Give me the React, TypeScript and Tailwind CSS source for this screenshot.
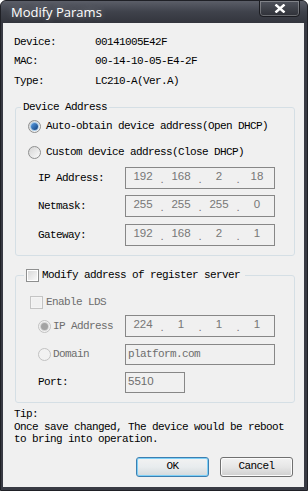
import React from 'react';

const mono = "font-['Liberation_Mono','DejaVu_Sans_Mono',monospace] text-[11px] tracking-[-0.6px]";

function Radio({ checked, disabled }: { checked?: boolean; disabled?: boolean }) {
  return (
    <span
      className={`w-[13px] h-[13px] rounded-full border flex items-center justify-center shrink-0 ${
        disabled ? 'border-[#c2c2c2] bg-[#f2f2f2]' : 'border-[#8e8f8f] bg-gradient-to-br from-[#d4d4d4] to-[#fbfbfb]'
      }`}
    >
      {checked && (
        <span
          className={`w-[7px] h-[7px] rounded-full ${
            disabled
              ? 'bg-[#a3a3a3] shadow-[0_0_0_1px_#d4d4d4]'
              : 'bg-gradient-to-br from-[#5aa0e6] to-[#0d3f7e] shadow-[0_0_0_1px_#a9cbe9]'
          }`}
        />
      )}
    </span>
  );
}

function Check({ disabled }: { disabled?: boolean }) {
  return (
    <span
      className={`w-[13px] h-[13px] border p-[1px] flex shrink-0 ${
        disabled ? 'border-[#c4c4c4] bg-[#f4f4f4]' : 'border-[#8e8f8f] bg-white'
      }`}
    >
      <span className={`flex-1 ${disabled ? 'bg-[#f0f0f0]' : 'bg-gradient-to-br from-[#d9d9d9] to-[#f8f8f8]'}`} />
    </span>
  );
}

function IpBox({ parts }: { parts: string[] }) {
  return (
    <div className="w-[150px] h-full border border-[#878787] flex items-center font-['Liberation_Sans',Arial,sans-serif] text-[11.5px] tracking-normal text-[#777777] leading-none">
      {parts.map((p, i) => (
        <React.Fragment key={i}>
          {i > 0 && <span className="w-[4px] text-center pt-[3px]">.</span>}
          <span className="flex-1 text-center pb-[3px]">{p}</span>
        </React.Fragment>
      ))}
    </div>
  );
}

function InfoRow({ label, value, h }: { label: string; value: string; h: string }) {
  return (
    <div className={`flex items-center ${h}`}>
      <span className="w-[81px]">{label}</span>
      <span>{value}</span>
    </div>
  );
}

export default function App(): JSX.Element {
  return (
    <div className="w-[308px] h-[491px] bg-[#383a43] border border-[#1f2026] rounded-t-[6px] flex flex-col pl-[2px] pr-[3px] pb-[3px] overflow-hidden">
      {/* title bar */}
      <div className="h-[22px] -mx-[2px] -mr-[3px] bg-gradient-to-b from-[#5b5e68] via-[#3f424b] to-[#33353d] flex justify-between items-start">
        <span className="ml-[10px] mt-[3px] text-white text-[13px] leading-[17px] font-['Open_Sans','Noto_Sans',sans-serif] [text-shadow:0_0_6px_rgba(255,255,255,0.35)]">
          Modify Params
        </span>
        <div className="mr-[7px] -mt-[1px] w-[41px] h-[17px] rounded-b-[4px] border border-[#1b1c21] bg-gradient-to-b from-[#50535c] to-[#2f3138] shadow-[inset_0_0_0_1px_rgba(255,255,255,0.28)] flex items-center justify-center">
          <svg width="12" height="9" viewBox="0 0 12 9">
            <path d="M1.5 0.5 L10.5 8.5 M10.5 0.5 L1.5 8.5" stroke="#ffffff" strokeWidth="2.4" />
          </svg>
        </div>
      </div>

      {/* client area */}
      <div className={`flex-1 bg-[#f0f0f0] text-black leading-none ${mono} flex flex-col`}>
        <div className="pt-[9px] pl-[11px]">
          <InfoRow label="Device:" value="00141005E42F" h="h-[20px]" />
          <InfoRow label="MAC:" value="00-14-10-05-E4-2F" h="h-[19px]" />
          <InfoRow label="Type:" value="LC210-A(Ver.A)" h="h-[20px]" />
        </div>

        <fieldset className="mt-[10px] ml-[12px] w-[280px] border border-[#d5dfe5] rounded-[3px] pb-[9px]">
          <legend className="ml-[5px] px-[2px] h-[12px] leading-[12px]">Device Address</legend>
          <div className="h-[26px] flex items-center pl-[12px] gap-[5px]">
            <Radio checked />
            <span>Auto-obtain device address(Open DHCP)</span>
          </div>
          <div className="h-[26px] flex items-center pl-[12px] gap-[5px]">
            <Radio />
            <span>Custom device address(Close DHCP)</span>
          </div>
          <div className="mt-[2px] h-[22px] flex items-center pl-[22px]">
            <span className="w-[87px]">IP Address:</span>
            <IpBox parts={['192', '168', '2', '18']} />
          </div>
          <div className="mt-[6px] h-[22px] flex items-center pl-[22px]">
            <span className="w-[87px]">Netmask:</span>
            <IpBox parts={['255', '255', '255', '0']} />
          </div>
          <div className="mt-[7px] h-[22px] flex items-center pl-[22px]">
            <span className="w-[87px]">Gateway:</span>
            <IpBox parts={['192', '168', '2', '1']} />
          </div>
        </fieldset>

        <fieldset className="mt-[12px] ml-[12px] w-[280px] border border-[#d5dfe5] rounded-[3px] pb-[9px]">
          <legend className="ml-[8px] pl-[2px] pr-[5px] h-[14px] flex items-center gap-[3px]">
            <Check />
            <span>Modify address of register server</span>
          </legend>
          <div className="mt-[10px] h-[20px] flex items-center pl-[14px] gap-[3px] text-[#6d6d6d]">
            <Check disabled />
            <span>Enable LDS</span>
          </div>
          <div className="mt-[3px] h-[22px] flex items-center pl-[22px]">
            <span className="w-[87px] flex items-center gap-[2px] text-[#6d6d6d]">
              <Radio checked disabled />
              <span>IP Address</span>
            </span>
            <IpBox parts={['224', '1', '1', '1']} />
          </div>
          <div className="mt-[7px] h-[21px] flex items-center pl-[22px]">
            <span className="w-[87px] flex items-center gap-[2px] text-[#6d6d6d]">
              <Radio disabled />
              <span>Domain</span>
            </span>
            <div className="w-[150px] h-full border border-[#878787] flex items-center pl-[2px] text-[#6d6d6d]">
              platform.com
            </div>
          </div>
          <div className="mt-[7px] h-[21px] flex items-center pl-[22px]">
            <span className="w-[87px]">Port:</span>
            <div className="w-[60px] h-full border border-[#878787] flex items-center pl-[2px] pb-[2px] font-['Liberation_Sans',Arial,sans-serif] text-[11.5px] tracking-normal text-[#6d6d6d]">
              5510
            </div>
          </div>
        </fieldset>

        <div className="mt-[5px] pl-[11px] leading-[12.5px]">
          <div>Tip:</div>
          <div>Once save changed, The device would be reboot</div>
          <div>to bring into operation.</div>
        </div>

        <div className="mt-[11px] pr-[11px] flex justify-end gap-[11px]">
          <button className="w-[73px] h-[20px] rounded-[3px] border border-[#3c7fb1] bg-gradient-to-b from-[#f2f2f2] via-[#e8ecee] to-[#d3d9dc] shadow-[inset_0_0_0_1px_#7ed0f7] flex items-center justify-center">
            OK
          </button>
          <button className="w-[73px] h-[20px] rounded-[3px] border border-[#707070] bg-gradient-to-b from-[#f2f2f2] via-[#e6e6e6] to-[#cfcfcf] shadow-[inset_0_0_0_1px_#fbfbfb] flex items-center justify-center">
            Cancel
          </button>
        </div>
      </div>
    </div>
  );
}
